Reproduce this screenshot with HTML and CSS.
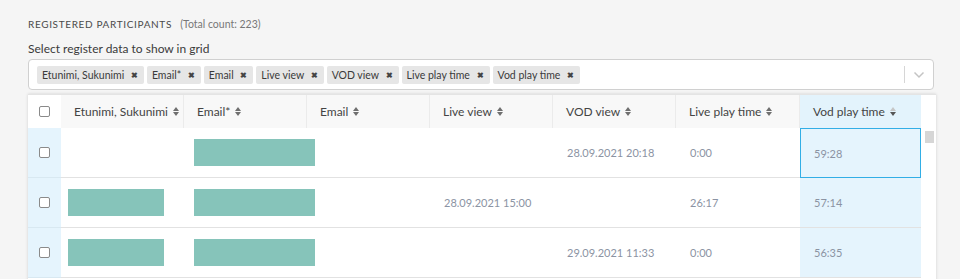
FILE: index.html
```html
<!DOCTYPE html>
<html lang="en">
<head>
  <meta charset="UTF-8" />
  <title>Registered participants</title>
  <link rel="stylesheet" href="styles.css">
</head>
<body>
  <div class="section">
    <h3 class="title">Registered participants <span class="count">(Total count: 223)</span></h3>
    <label class="field-label">Select register data to show in grid</label>
    <div class="multi-select">
      <div class="chips">
        <span class="chip">Etunimi, Sukunimi <b>&#x2716;</b></span>
        <span class="chip">Email* <b>&#x2716;</b></span>
        <span class="chip">Email <b>&#x2716;</b></span>
        <span class="chip">Live view <b>&#x2716;</b></span>
        <span class="chip">VOD view <b>&#x2716;</b></span>
        <span class="chip">Live play time <b>&#x2716;</b></span>
        <span class="chip">Vod play time <b>&#x2716;</b></span>
      </div>
      <div class="indicators">
        <span class="sep"></span>
        <svg width="12" height="8" viewBox="0 0 12 8"><path d="M1.5 1.5 L6 6 L10.5 1.5" fill="none" stroke="#c4c4c4" stroke-width="1.5"/></svg>
      </div>
    </div>

    <div class="grid">
      <div class="row head">
        <div class="cell check"><span class="box"></span></div>
        <div class="cell">Etunimi, Sukunimi <i class="sort"></i></div>
        <div class="cell">Email* <i class="sort"></i></div>
        <div class="cell">Email <i class="sort"></i></div>
        <div class="cell">Live view <i class="sort"></i></div>
        <div class="cell">VOD view <i class="sort"></i></div>
        <div class="cell wide">Live play time <i class="sort"></i></div>
        <div class="cell last active">Vod play time <i class="sort desc"></i></div>
        <div class="cell gutter"></div>
      </div>
      <div class="body">
        <div class="rows">
          <div class="row">
            <div class="cell check"><span class="box"></span></div>
            <div class="cell"></div>
            <div class="cell"><span class="mask mask-email"></span></div>
            <div class="cell"></div>
            <div class="cell"></div>
            <div class="cell">28.09.2021 20:18</div>
            <div class="cell wide">0:00</div>
            <div class="cell last active selected">59:28</div>
          </div>
          <div class="row">
            <div class="cell check"><span class="box"></span></div>
            <div class="cell"><span class="mask mask-name"></span></div>
            <div class="cell"><span class="mask mask-email"></span></div>
            <div class="cell"></div>
            <div class="cell">28.09.2021 15:00</div>
            <div class="cell"></div>
            <div class="cell wide">26:17</div>
            <div class="cell last active">57:14</div>
          </div>
          <div class="row">
            <div class="cell check"><span class="box"></span></div>
            <div class="cell"><span class="mask mask-name"></span></div>
            <div class="cell"><span class="mask mask-email"></span></div>
            <div class="cell"></div>
            <div class="cell"></div>
            <div class="cell">29.09.2021 11:33</div>
            <div class="cell wide">0:00</div>
            <div class="cell last active">56:35</div>
          </div>
        </div>
        <div class="scrollbar"><span class="thumb"></span></div>
      </div>
    </div>
  </div>
</body>
</html>
```

FILE: styles.css
```css
body {
  margin: 0;
  background: #f5f5f5;
  font-family: Lato, "Open Sans", sans-serif;
  color: #333;
}
.section {
  padding: 17px 0 0 28px;
  width: 908px;
}
.title {
  margin: 0;
  font-size: 10px;
  font-weight: 400;
  letter-spacing: 0.65px;
  text-transform: uppercase;
  color: #4a4a4a;
  line-height: 14px;
}
.count {
  margin-left: 5px;
  font-size: 10.5px;
  letter-spacing: 0;
  text-transform: none;
  color: #777;
}
.field-label {
  display: block;
  margin-top: 10px;
  font-size: 12px;
  line-height: 16px;
  color: #3a3a3a;
}
.multi-select {
  margin-top: 2px;
  width: 904px;
  height: 29px;
  background: #fff;
  border: 1px solid #d0d0d0;
  border-radius: 4px;
  display: flex;
  align-items: center;
  justify-content: space-between;
}
.chips {
  display: flex;
  gap: 3px;
  padding-left: 8px;
}
.chip {
  background: #e6e6e6;
  border-radius: 2px;
  height: 18px;
  line-height: 18px;
  padding: 0 6px 0 5px;
  font-size: 10.5px;
  color: #3a3a3a;
}
.chip b {
  margin-left: 4px;
  font-size: 7.5px;
  font-weight: 700;
  color: #444;
  vertical-align: 1px;
}
.indicators {
  display: flex;
  align-items: center;
  gap: 8px;
  padding-right: 8px;
}
.sep {
  width: 1px;
  height: 17px;
  background: #d6d6d6;
}
.grid {
  margin-top: 4px;
  background: #fff;
  border-top: 1px solid #e4e4e4;
  box-shadow: 0 0 3px rgba(0, 0, 0, 0.15);
  height: 190px;
  overflow: hidden;
}
.row {
  display: flex;
}
.cell {
  width: 123px;
  flex: none;
  box-sizing: border-box;
  display: flex;
  align-items: center;
  padding-left: 14px;
  font-size: 11px;
  color: #8b93a3;
}
.cell.wide { width: 124px; }
.cell.last { width: 121px; }
.cell.check {
  width: 33px;
  padding-left: 0;
  justify-content: center;
  background: #e5f4fd;
}
.head .cell {
  height: 33px;
  background: #f8f8f8;
  color: #444;
  font-size: 12px;
  border-right: 1px solid #ebebeb;
  padding-left: 13px;
}
.head .cell.check {
  background: #fff;
  border-right: none;
  padding-left: 0;
}
.head .cell.active {
  background: #e3f3fc;
  border-right: none;
}
.head .cell.gutter {
  width: 15px;
  background: #fff;
  border: none;
}
.box {
  width: 9px;
  height: 9px;
  border: 1px solid #8a8a8a;
  border-radius: 2px;
  background: #fff;
}
.sort {
  display: inline-flex;
  flex-direction: column;
  gap: 1px;
  margin-left: 5px;
}
.sort::before,
.sort::after {
  content: "";
  border-left: 3px solid transparent;
  border-right: 3px solid transparent;
}
.sort::before { border-bottom: 4px solid #6f6f6f; }
.sort::after { border-top: 4px solid #6f6f6f; }
.sort.desc::before { border-bottom-color: #c6c6c6; }
.sort.desc::after { border-top-color: #555; }
.body {
  display: flex;
}
.rows .row .cell {
  height: 50px;
  border-bottom: 1px solid #e2e2e2;
}
.rows .row .cell.check {
  border-bottom-color: #d8e8f1;
}
.rows .cell.active {
  background: #e5f4fd;
}
.rows .cell.selected {
  border: 1px solid #32aee6;
  padding-left: 13px;
}
.mask {
  display: block;
  flex: none;
  height: 27px;
  background: #86c4ba;
}
.mask-email {
  width: 121px;
  margin-left: -4px;
}
.mask-name {
  width: 96px;
  margin-left: -7px;
}
.scrollbar {
  width: 15px;
  padding-top: 3px;
  display: flex;
  justify-content: center;
  align-items: flex-start;
}
.thumb {
  width: 9px;
  height: 12px;
  background: #d6d6d6;
  margin-left: 2px;
}
```
